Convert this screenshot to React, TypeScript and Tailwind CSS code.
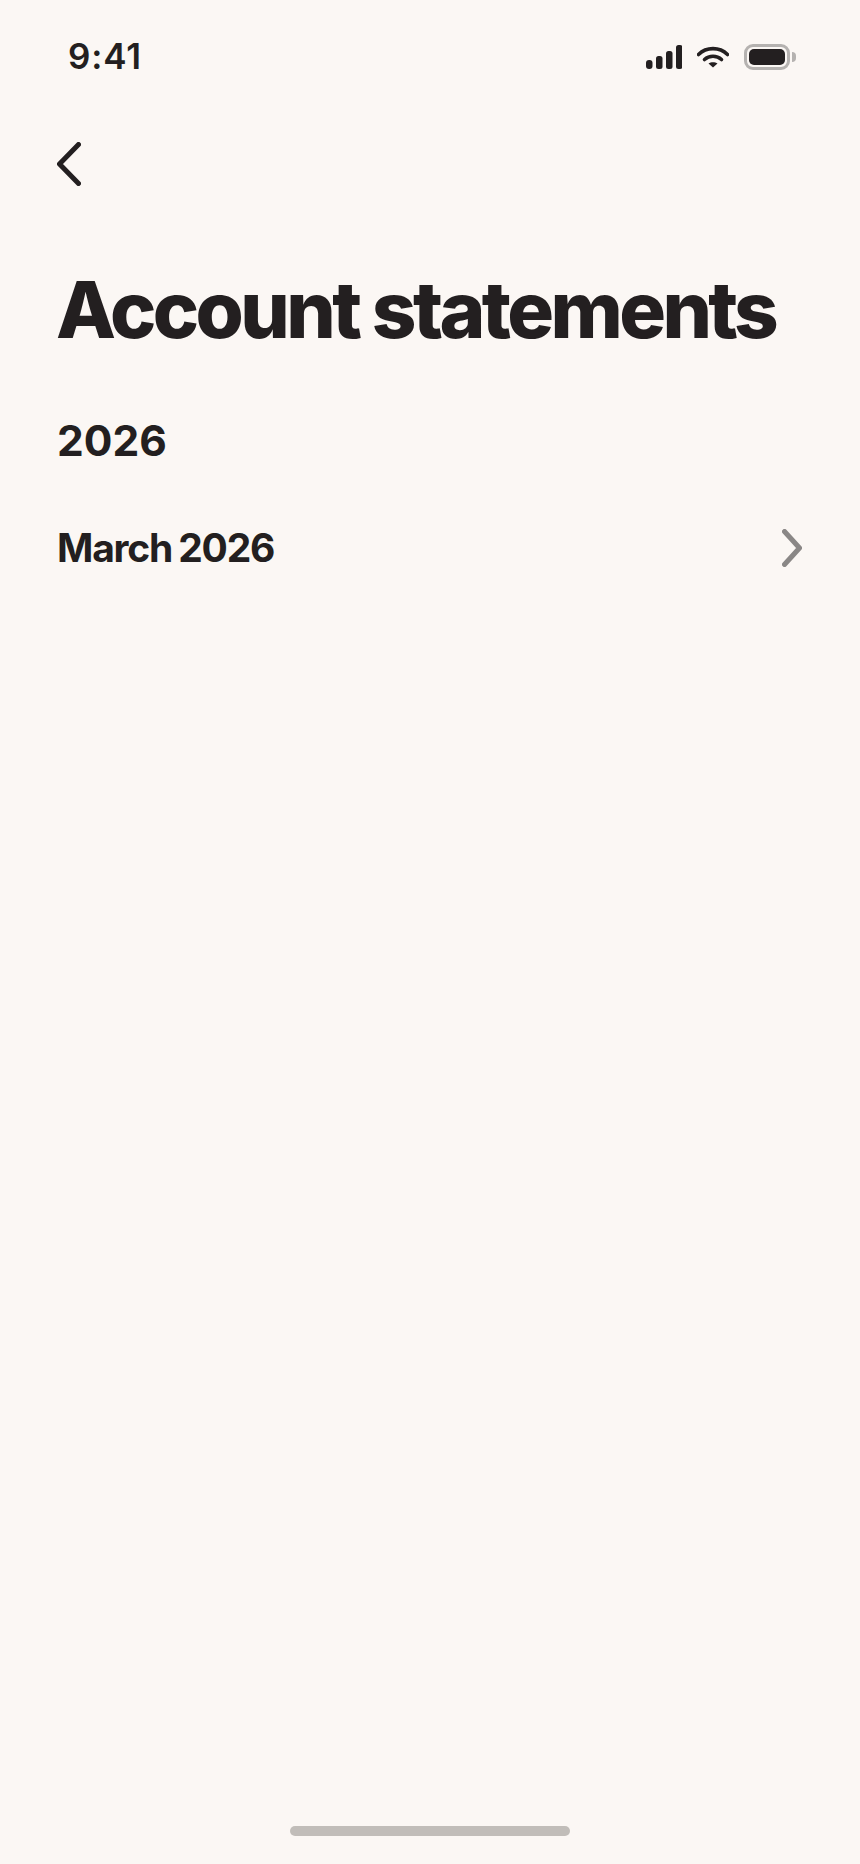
const StatusIcons = () => (
  <div className="flex items-center">
    <svg width="36" height="24" viewBox="0 0 36 24" fill="#231f20">
      <rect x="0" y="15" width="6.5" height="9" rx="3" />
      <rect x="10" y="11" width="6.5" height="13" rx="2.5" />
      <rect x="20" y="6" width="6.5" height="18" rx="2.5" />
      <rect x="30" y="0" width="6.5" height="24" rx="2.5" />
    </svg>
    <svg className="ml-[15px]" width="32" height="22" viewBox="0 0 32 22" fill="none">
      <path d="M1.5 8.5C9.5 0.7 22.5 0.7 30.5 8.5" stroke="#231f20" strokeWidth="3.6" strokeLinecap="round" />
      <path d="M7.5 13.5C12.2 9.2 19.8 9.2 24.5 13.5" stroke="#231f20" strokeWidth="3.6" strokeLinecap="round" />
      <path d="M11.5 17.6C14 15.9 18 15.9 20.5 17.6L16 21.6Z" fill="#231f20" />
    </svg>
    <div className="ml-[15px] flex items-center">
      <div className="flex h-[26px] w-[46px] items-center justify-center rounded-[9px] border-[3px] border-[#b5b2b0] p-[2px]">
        <div className="h-full w-full rounded-[5px] bg-[#231f20]" />
      </div>
      <div className="ml-[2px] h-[10px] w-[4px] rounded-r-full bg-[#b5b2b0]" />
    </div>
  </div>
);

export default function App() {
  return (
    <div className="flex min-h-[1864px] w-[860px] flex-col bg-[#fbf7f4] font-['Inter',sans-serif] text-[#231f20]">
      <header className="flex h-[140px] items-start justify-between pl-[68px] pr-[64px] pt-[36px]">
        <span className="text-[35px] font-semibold leading-[40px] tracking-[0.8px]">9:41</span>
        <div className="pt-[8px]">
          <StatusIcons />
        </div>
      </header>

      <main className="flex-1 px-[57px]">
        <button className="flex h-[48px] items-center">
          <svg width="24" height="44" viewBox="0 0 24 44" fill="none">
            <path d="M21.5 2.5L2.5 22L21.5 41.5" stroke="#231f20" strokeWidth="5" strokeLinecap="round" strokeLinejoin="round" />
          </svg>
        </button>

        <h1 className="ml-[-1px] mt-[76px] text-[78px] font-extrabold leading-[92px] tracking-[-3.6px] whitespace-nowrap">
          Account statements
        </h1>

        <h2 className="mt-[59px] text-[42.5px] font-bold leading-[52px]">2026</h2>

        <div className="mt-[53px] flex h-[56px] items-center justify-between">
          <span className="text-[39px] font-bold leading-[48px] tracking-[-1.2px] [word-spacing:-2px]">March 2026</span>
          <svg className="mr-[1px]" width="20" height="38" viewBox="0 0 20 38" fill="none">
            <path d="M2.5 2.5L17.5 19L2.5 35.5" stroke="#8a8786" strokeWidth="5" strokeLinecap="round" strokeLinejoin="round" />
          </svg>
        </div>
      </main>

      <footer className="flex h-[38px] justify-center">
        <div className="h-[10px] w-[280px] rounded-full bg-[#c1bdb9]" />
      </footer>
    </div>
  );
}
